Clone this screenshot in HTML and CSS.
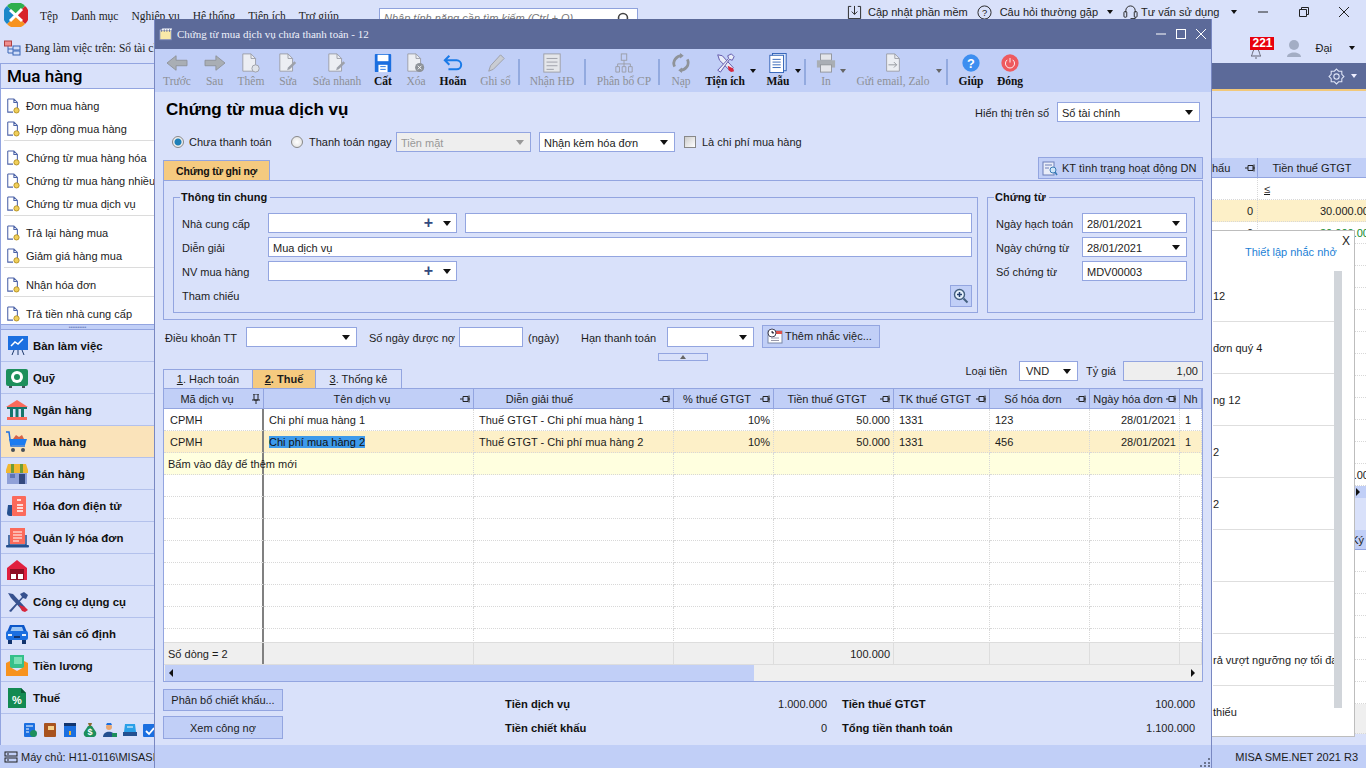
FILE: index.html
```html
<!DOCTYPE html>
<html lang="vi">
<head>
<meta charset="utf-8">
<title>MISA SME.NET 2021</title>
<link rel="stylesheet" href="styles.css">
</head>
<body>
<svg class="defs" aria-hidden="true">
  <symbol id="doc" viewBox="0 0 16 18"><path d="M2 1h7l4 4v7M2 1v15h6M9 1v4h4" fill="none" stroke="#4c63a8" stroke-width="1.2"/><circle cx="12" cy="14" r="3" fill="#f0cf5a" stroke="#b08d22"/></symbol>
  <symbol id="pin" viewBox="0 0 10 8"><path d="M0 4h3M3 1.5h5v5H3zM8 4h2M9 .5v7" fill="none" stroke="#222" stroke-width="1"/></symbol>
  <symbol id="pinv" viewBox="0 0 8 10"><path d="M1 0h6M2 0v6h4V0M0 6h8M4 6v4" fill="none" stroke="#222" stroke-width="1"/></symbol>
  <symbol id="gdoc" viewBox="0 0 20 22"><path d="M3 1h9l5 5v14H3z" fill="#eceef3" stroke="#9a9da6"/><path d="M12 1v5h5" fill="none" stroke="#9a9da6"/></symbol>
</svg>

<div class="app">
  <header class="topbar">
    <svg class="logo" viewBox="0 0 24 24"><path d="M12 12L3 3A12 12 0 0 1 21 3z" fill="#2fae4e"/><path d="M12 12L21 3A12 12 0 0 1 21 21z" fill="#d8232a"/><path d="M12 12L21 21A12 12 0 0 1 3 21z" fill="#f7931e"/><path d="M12 12L3 21A12 12 0 0 1 3 3z" fill="#1b87c9"/><path d="M6 7l12 11M18 6L6 18" stroke="#fff" stroke-width="3"/></svg>
    <nav class="menu"><span>Tệp</span><span>Danh mục</span><span>Nghiệp vụ</span><span>Hệ thống</span><span>Tiện ích</span><span>Trợ giúp</span></nav>
    <div class="search"><span>Nhập tính năng cần tìm kiếm (Ctrl + Q)</span><svg class="search-i" viewBox="0 0 12 12"><circle cx="6" cy="6" r="4.5" fill="none" stroke="#444" stroke-width="1.6"/></svg></div>
    <div class="top-right">
      <svg class="ti" viewBox="0 0 16 16"><path d="M1.5 1.5h3M11.500 1.500h3M1.500 1.500v13h13v-13M8 1v9M5 7l3 3 3-3" fill="none" stroke="#222"/></svg>
      <span class="tl t1">Cập nhật phần mềm</span>
      <svg class="ti" viewBox="0 0 16 16"><circle cx="8" cy="8" r="7" fill="none" stroke="#222"/><text x="8" y="12" class="svg-q">?</text></svg>
      <span class="tl t2">Câu hỏi thường gặp</span>
      <i class="tri tm"></i>
      <svg class="ti hs" viewBox="0 0 16 16"><path d="M3 8V6a5 5 0 0 1 10 0v2" fill="none" stroke="#222"/><rect x="1" y="7" width="3" height="6" rx="1" fill="none" stroke="#222"/><rect x="12" y="7" width="3" height="6" rx="1" fill="none" stroke="#222"/><path d="M13 13v1.500H8" fill="none" stroke="#222"/></svg>
      <span class="tl t3">Tư vấn sử dụng</span>
      <i class="tri tn"></i>
      <div class="app-ctl">
        <svg viewBox="0 0 12 12"><path d="M1 6h10" stroke="#222"/></svg>
        <svg viewBox="0 0 12 12"><path d="M1.500 3.500h7v7h-7zM3.500 3.500v-2h7v7h-2" fill="none" stroke="#222"/></svg>
        <svg viewBox="0 0 12 12"><path d="M1 1l10 10M11 1L1 11" stroke="#222"/></svg>
      </div>
    </div>
  </header>

  <div class="workbar">
    <svg class="wi" viewBox="0 0 17 16"><path d="M4 6v7h5M4 9h5" fill="none" stroke="#3a66b5"/><rect x="0.500" y="1" width="7" height="5" fill="#f08f8f" stroke="#b04040"/><rect x="9" y="6" width="7" height="4" fill="#cfdcf8" stroke="#3a66b5"/><rect x="9" y="11" width="7" height="4" fill="#cfdcf8" stroke="#3a66b5"/></svg>
    <span class="wtext">Đang làm việc trên: Sổ tài chính</span>
    <div class="user">
      <div class="bell"><svg viewBox="0 0 14 14"><path d="M2 10c2-1 1-7 5-7s3 6 5 7zM6 12h2" fill="none" stroke="#667"/></svg><span class="badge">221</span></div>
      <svg class="avatar" viewBox="0 0 16 20"><circle cx="8" cy="7" r="5" fill="#a3adc4"/><path d="M1 19c0-6 14-6 14 0z" fill="#a3adc4"/></svg>
      <span class="uname">Đại</span>
      <i class="tri un"></i>
    </div>
  </div>

  <div class="main">
    <aside class="side">
      <h2 class="side-title">Mua hàng</h2>
      <div class="side-list">
        <a><svg><use href="#doc"/></svg>Đơn mua hàng</a>
        <a><svg><use href="#doc"/></svg>Hợp đồng mua hàng</a>
        <hr>
        <a><svg><use href="#doc"/></svg>Chứng từ mua hàng hóa</a>
        <a><svg><use href="#doc"/></svg>Chứng từ mua hàng nhiều hóa đơn</a>
        <a><svg><use href="#doc"/></svg>Chứng từ mua dịch vụ</a>
        <hr>
        <a><svg><use href="#doc"/></svg>Trả lại hàng mua</a>
        <a><svg><use href="#doc"/></svg>Giảm giá hàng mua</a>
        <hr>
        <a><svg><use href="#doc"/></svg>Nhận hóa đơn</a>
        <hr>
        <a><svg><use href="#doc"/></svg>Trả tiền nhà cung cấp</a>
      </div>
      <div class="grip">••••••••••</div>
      <nav class="side-nav">
        <a><svg viewBox="0 0 24 22"><rect x="3" y="1" width="20" height="14" fill="#1b6fe0"/><path d="M6 11l4-4 3 2 5-5" fill="none" stroke="#fff" stroke-width="1.500"/><path d="M9 15l-2 5M17 15l2 5M13 15v5" stroke="#1d3a6e"/></svg>Bàn làm việc</a>
        <a><svg viewBox="0 0 24 22"><rect x="1" y="2" width="22" height="17" rx="2" fill="#1d8f5c"/><circle cx="12" cy="10" r="6" fill="#fff"/><circle cx="12" cy="10" r="3" fill="#1d8f5c"/><path d="M4 19h3v2H4zM17 19h3v2h-3z" fill="#46505a"/></svg>Quỹ</a>
        <a><svg viewBox="0 0 24 22"><path d="M12 1L23 8H1z" fill="#fb6a5b"/><rect x="2" y="8" width="20" height="2" fill="#14766c"/><path d="M5 10h3v8H5zM10.500 10h3v8h-3zM16 10h3v8h-3z" fill="#14766c"/><rect x="2" y="18" width="20" height="3" fill="#fb6a5b"/></svg>Ngân hàng</a>
        <a class="on"><svg viewBox="0 0 24 22"><path d="M8 8l3-4 3 2 3-2 2 4z" fill="#d4634a"/><path d="M1 1h3l2 14h14" fill="none" stroke="#1b6fe0" stroke-width="1.500"/><path d="M4 8h18l-2 6H6z" fill="#1b7cf0"/><circle cx="8" cy="19" r="2" fill="#46505a"/><circle cx="18" cy="19" r="2" fill="#46505a"/></svg>Mua hàng</a>
        <a><svg viewBox="0 0 24 22"><rect x="2" y="8" width="20" height="13" fill="#8fa0d8"/><rect x="14" y="11" width="6" height="10" fill="#34497e"/><rect x="5" y="11" width="5" height="4" fill="#5f74b5"/><path d="M3 1h18l2 6v3H1V7z" fill="#f2b72f"/><path d="M6 1h3v9H6zM15 1h3v9h-3z" fill="#6e9c36"/></svg>Bán hàng</a>
        <a><svg viewBox="0 0 24 22"><path d="M3 10h4v11H5a3 3 0 0 1-3-3z" fill="#24508f"/><rect x="7" y="1" width="14" height="20" rx="1" fill="#fb6a5b"/><path d="M12 5h4M12 10h6M12 13h6M12 16h6" stroke="#fff" stroke-width="1.300"/></svg>Hóa đơn điện tử</a>
        <a><svg viewBox="0 0 24 22"><rect x="5" y="1" width="15" height="16" fill="#fb6a5b"/><path d="M8 5h9M8 8h9M8 11h9M8 14h6" stroke="#fff" stroke-width="1.200"/><path d="M4 8v10h17V8" fill="none" stroke="#24508f" stroke-width="1.500"/><rect x="1" y="18" width="23" height="2.500" rx="1" fill="#24508f"/></svg>Quản lý hóa đơn</a>
        <a><svg viewBox="0 0 24 22"><path d="M2 9l10-8 10 8v12H2z" fill="#e0203f"/><rect x="5" y="10" width="14" height="11" fill="#8e0f24"/><path d="M6 15h5v5H6zM13 15h5v5h-5z" fill="#fff"/></svg>Kho</a>
        <a><svg viewBox="0 0 24 22"><path d="M4 20L17 6l-2-3 4-2 4 3-2 4-3-1L6 21z" fill="#36518f"/><path d="M3 2l5 1 12 13-3 3L6 7z" fill="#36518f"/><path d="M14 14l6 2 3 3-3 2-3-1z" fill="#d7263d"/></svg>Công cụ dụng cụ</a>
        <a><svg viewBox="0 0 24 22"><path d="M5 2h14l3 7H2z" fill="#0d57c9"/><path d="M7 4h10l1.500 4h-13z" fill="#9cc6f5"/><rect x="1" y="8" width="22" height="9" rx="2" fill="#1b6fe0"/><path d="M3 17h4v4H3zM17 17h4v4h-4z" fill="#12346e"/><path d="M3 11h4v2H3zM17 11h4v2h-4z" fill="#e7f0fb"/><rect x="9" y="13" width="6" height="2" fill="#12346e"/></svg>Tài sản cố định</a>
        <a><svg viewBox="0 0 24 22"><rect x="5" y="0" width="14" height="13" fill="#35c08a"/><rect x="9" y="2" width="8" height="7" fill="#7be0b5"/><path d="M1 8l4-2v6l7 4 7-4V6l4 2v13H1z" fill="#f7931e"/></svg>Tiền lương</a>
        <a><svg viewBox="0 0 24 22"><path d="M3 1h13l5 5v15H3z" fill="#138a52"/><path d="M16 1l5 5h-5z" fill="#0a5c36"/><text x="12" y="17" class="svg-pct">%</text></svg>Thuế</a>
      </nav>
      <div class="mini">
        <svg viewBox="0 0 14 14"><rect x="1" y="0" width="11" height="14" rx="1" fill="#1b6fe0"/><path d="M3 3h7M3 6h3M3 9h3" stroke="#fff"/><circle cx="10.500" cy="10.500" r="3.500" fill="#1d8f5c"/></svg>
        <svg viewBox="0 0 14 14"><rect x="1" y="0" width="12" height="14" rx="1" fill="#a8531f"/><rect x="5" y="3" width="6" height="4" fill="#f6d28c"/></svg>
        <svg viewBox="0 0 14 14"><rect x="1" y="2" width="12" height="12" fill="#1b6fe0"/><rect x="1" y="0" width="12" height="3" fill="#12346e"/><path d="M6 8h2v4H6z" fill="#f2b72f"/></svg>
        <svg viewBox="0 0 14 14"><path d="M5 3h4l4 6c1 3-1 5-3 5H4C2 14 0 12 1 9z" fill="#1d8f5c"/><path d="M5 0h4L8 3H6z" fill="#8a6a2f"/><text x="7" y="12" class="svg-s">$</text></svg>
        <svg viewBox="0 0 14 14"><circle cx="6" cy="4" r="3" fill="#e9a772"/><path d="M3 2h6L8 0H4z" fill="#1b6fe0"/><path d="M0 14c0-7 12-7 12 0z" fill="#24508f"/><rect x="9" y="10" width="5" height="4" fill="#1d8f5c"/></svg>
        <svg viewBox="0 0 14 14"><path d="M2 1h10l1 8H1z" fill="#2aa0e8"/><path d="M4 4h6" stroke="#fff"/><rect x="0" y="9" width="14" height="4" fill="#24508f"/></svg>
        <svg viewBox="0 0 14 14"><rect x="0" y="1" width="14" height="13" rx="1" fill="#1b6fe0"/><path d="M3 8l3 3 5-6" fill="none" stroke="#fff" stroke-width="1.800"/></svg>
      </div>
    </aside>

    <section class="content">
      <div class="cbar"><svg class="gear" viewBox="0 0 16 16"><circle cx="8" cy="8" r="2.500" fill="none" stroke="#dfe5f7"/><path d="M8 1l2 2 3 0 0 3 2 2-2 2 0 3-3 0-2 2-2-2-3 0 0-3-2-2 2-2 0-3 3 0z" fill="none" stroke="#dfe5f7"/></svg><i class="tri gt"></i></div>
      <div class="cfilter"></div>
      <div class="bg-grid">
        <div class="bg-head"><span class="bc1">hấu<svg><use href="#pin"/></svg></span><span class="bc2">Tiền thuế GTGT</span></div>
        <div class="bg-row bfil"><span class="bc1"></span><span class="bc2"><u>≤</u></span></div>
        <div class="bg-row bsel"><span class="bc1 num">0</span><span class="bc2 num clip">30.000.000</span></div>
        <div class="bg-row"><span class="bc1 num">0</span><span class="bc2 num clip green">30.000.000</span></div>
        <div class="bg-row"></div><div class="bg-row"></div><div class="bg-row"></div><div class="bg-row"></div><div class="bg-row"></div>
        <div class="bg-row"></div><div class="bg-row"></div><div class="bg-row"></div><div class="bg-row"></div><div class="bg-row"></div>
        <div class="bg-row"><span class="bc1"></span><span class="bc2 num clip">30.000.000</span></div>
        <div class="bg-scroll"><i class="tri tr"></i></div>
        <div class="bg-gap"></div>
        <div class="bg-head h2"><span class="bc2 end">Ký</span></div>
        <div class="bg-row"></div><div class="bg-row"></div><div class="bg-row"></div><div class="bg-row"></div>
        <div class="bg-row"></div><div class="bg-row"></div><div class="bg-row"></div>
        <div class="bg-row bsum"></div>
      </div>
    </section>
  </div>

  <footer class="status">
    <svg class="si" viewBox="0 0 14 12"><rect x="1" y="1" width="12" height="4" fill="none" stroke="#222"/><rect x="1" y="7" width="12" height="4" fill="none" stroke="#222"/><path d="M3 3h2M3 9h2" stroke="#222"/></svg>
    <span>Máy chủ: H11-0116\MISASME</span>
    <span class="ver">MISA SME.NET 2021 R3</span>
  </footer>

  <aside class="popup">
    <div class="pop-head"><a>Thiết lập nhắc nhở</a><span class="pop-x">X</span></div>
    <div class="pop-body">
      <ul class="pop-list">
        <li>12</li><li>đơn quý 4</li><li>ng 12</li><li>2</li><li>2</li><li></li><li></li>
        <li>rả vượt ngưỡng nợ tối đa</li><li class="last">thiếu</li>
      </ul>
      <div class="pop-track"></div>
    </div>
  </aside>

  <div class="window">
    <div class="win-title">
      <svg class="win-ic" viewBox="0 0 16 14"><rect x="1" y="2" width="13" height="11" fill="#f8e9a8" stroke="#7a88c0"/><path d="M1 2l3-2h11l-1 2z" fill="#fff"/><path d="M3 1v3M6 1v3M9 1v3M12 1v3" stroke="#5c6a99"/></svg>
      <span class="win-name">Chứng từ mua dịch vụ chưa thanh toán - 12</span>
      <div class="win-ctl">
        <svg viewBox="0 0 10 10"><path d="M0 5h10" stroke="#fff"/></svg>
        <svg viewBox="0 0 10 10"><rect x="0.500" y="0.500" width="9" height="9" fill="none" stroke="#fff"/></svg>
        <svg viewBox="0 0 10 10"><path d="M0 0l10 10M10 0L0 10" stroke="#fff"/></svg>
      </div>
    </div>

    <div class="toolbar">
      <button class="tb off"><svg viewBox="0 0 24 22"><path d="M1 11l10-8v5h12v6H11v5z" fill="#a9aeb4" stroke="#8d9298"/></svg>Trước</button>
      <button class="tb off"><svg viewBox="0 0 24 22"><path d="M23 11l-10-8v5H1v6h12v5z" fill="#a9aeb4" stroke="#8d9298"/></svg>Sau</button>
      <button class="tb off"><svg viewBox="0 0 24 22"><use href="#gdoc" width="20" height="22"/><circle cx="17" cy="17" r="4" fill="#dfe3ea" stroke="#9a9da6"/></svg>Thêm</button>
      <button class="tb off"><svg viewBox="0 0 24 22"><use href="#gdoc" width="20" height="22"/><path d="M11 19l1-3 7-7 2 2-7 7z" fill="#9da1aa"/></svg>Sửa</button>
      <button class="tb off"><svg viewBox="0 0 24 22"><use href="#gdoc" width="20" height="22"/><path d="M11 19l1-3 7-7 2 2-7 7z" fill="#9da1aa"/></svg>Sửa nhanh</button>
      <button class="tb act"><svg viewBox="0 0 24 22"><rect x="3" y="1" width="18" height="20" rx="1" fill="#1b6fe0"/><rect x="6" y="2" width="12" height="7" fill="#fff"/><rect x="7" y="13" width="10" height="8" fill="#fff"/><path d="M9 15h6M9 18h6" stroke="#1b6fe0"/></svg>Cất</button>
      <button class="tb off"><svg viewBox="0 0 24 22"><use href="#gdoc" width="20" height="22"/><circle cx="16" cy="16" r="5" fill="#8d9298"/><path d="M14 14l4 4M18 14l-4 4" stroke="#fff"/></svg>Xóa</button>
      <button class="tb act"><svg viewBox="0 0 24 22"><path d="M8 3L3 8l5 5M3 8h13a4.500 4.500 0 0 1 0 10H7" fill="none" stroke="#1b7be8" stroke-width="2.200"/></svg>Hoãn</button>
      <button class="tb off"><svg viewBox="0 0 24 22"><path d="M4 20l2-6L17 2l4 4L9 18z" fill="#c9ccd3" stroke="#9a9da6"/></svg>Ghi sổ</button>
      <i class="tb-sep"></i>
      <button class="tb off"><svg viewBox="0 0 24 22"><rect x="3" y="1" width="18" height="20" fill="#e4e6ea" stroke="#9a9da6"/><path d="M6 6h12M6 10h12M6 14h12M6 18h8" stroke="#9a9da6"/></svg>Nhận HĐ</button>
      <i class="tb-sep wide"></i>
      <button class="tb off"><svg viewBox="0 0 24 22"><rect x="9" y="1" width="6" height="7" fill="none" stroke="#9a9da6"/><path d="M12 8v4M5 12h14M5 12v3M12 12v3M19 12v3" stroke="#9a9da6"/><path d="M3 15h4v6H3zM10 15h4v6h-4zM17 15h4v6h-4z" fill="none" stroke="#9a9da6"/></svg>Phân bổ CP</button>
      <i class="tb-sep"></i>
      <button class="tb off"><svg viewBox="0 0 24 22"><path d="M5 15C2 9 7 3 13 3M19 7c3 6-2 12-8 12" fill="none" stroke="#8f9399" stroke-width="3"/><path d="M11 0l4 3-4 3zM13 16l-4 3 4 3z" fill="#8f9399"/></svg>Nạp</button>
      <button class="tb act drop d1"><svg viewBox="0 0 24 22"><path d="M4 2l5 1 12 13-3 4L6 8z" fill="#e9edf8" stroke="#5b4fa6"/><path d="M4 19L16 6l-1-3 4-2 3 3-2 4-3-1L7 21z" fill="#e9edf8" stroke="#5b4fa6"/><path d="M15 14l6 3 1 3-3 1-3-2z" fill="#d7263d"/></svg>Tiện ích</button>
      <i class="tb-gap"></i>
      <button class="tb act drop d2"><svg viewBox="0 0 24 22"><rect x="6" y="0.500" width="15" height="19" fill="#dbe7fb" stroke="#2c5fb5"/><rect x="3" y="2.500" width="15" height="19" fill="#fff" stroke="#2c5fb5"/><path d="M6 7h9M6 10h9M6 13h9M6 16h9" stroke="#2c5fb5"/></svg>Mẫu</button>
      <i class="tb-sep end"></i>
      <button class="tb off drop d3"><svg viewBox="0 0 24 22"><rect x="6" y="1" width="12" height="7" fill="#e4e6ea" stroke="#8f9399"/><rect x="2" y="8" width="20" height="8" fill="#a9aeb4"/><rect x="6" y="13" width="12" height="8" fill="#e4e6ea" stroke="#8f9399"/></svg>In</button>
      <button class="tb off drop d4"><svg viewBox="0 0 24 22"><use href="#gdoc" width="20" height="22" x="2"/><path d="M7 13h9M13 10l3 3-3 3" fill="none" stroke="#8f9399"/></svg>Gửi email, Zalo</button>
      <i class="tb-sep end"></i>
      <button class="tb act"><svg viewBox="0 0 24 22"><circle cx="12" cy="11" r="9.500" fill="#3d8ef0"/><text x="12" y="16" class="svg-h">?</text></svg>Giúp</button>
      <button class="tb act"><svg viewBox="0 0 24 22"><circle cx="12" cy="11" r="9.500" fill="#ee5a5f"/><path d="M9 7.500a5 5 0 1 0 6 0M12 5.500v5" fill="none" stroke="#fff"/></svg>Đóng</button>
    </div>

    <div class="win-body">
      <div class="head">
        <h1>Chứng từ mua dịch vụ</h1>
        <label class="lbl shown">Hiển thị trên số</label>
        <div class="combo w143">Sổ tài chính</div>
      </div>

      <div class="pay">
        <i class="radio on"></i><span class="p1">Chưa thanh toán</span>
        <i class="radio"></i><span class="p2">Thanh toán ngay</span>
        <div class="combo dis w135">Tiền mặt</div>
        <div class="combo w136">Nhận kèm hóa đơn</div>
        <i class="check"></i><span>Là chi phí mua hàng</span>
      </div>

      <div class="tabrow">
        <div class="tab-o">Chứng từ ghi nợ</div>
        <button class="kt"><svg viewBox="0 0 16 16"><rect x="1" y="2" width="11" height="13" fill="#e9edf8" stroke="#6c7fb8"/><path d="M3 5h7M3 8h4" stroke="#6c7fb8"/><circle cx="11" cy="10" r="3" fill="#cfe6f8" stroke="#3a7ab5"/><path d="M13 12l2 3" stroke="#3a7ab5" stroke-width="1.500"/></svg>KT tình trạng hoạt động DN</button>
      </div>

      <div class="panel">
        <fieldset class="fs fs-main">
          <legend>Thông tin chung</legend>
          <div class="fgrid">
            <label>Nhà cung cấp</label>
            <div class="input plus"><b>+</b></div>
            <i></i>
            <div class="input"></div>
            <label>Diễn giải</label>
            <div class="input span3 pad">Mua dịch vụ</div>
            <label>NV mua hàng</label>
            <div class="input plus"><b>+</b></div>
            <i></i><i></i>
            <label>Tham chiếu</label>
            <i></i><i></i>
            <button class="zoom"><svg viewBox="0 0 16 16"><circle cx="6.500" cy="6.500" r="5" fill="#e6f1fb" stroke="#44607f" stroke-width="1.400"/><path d="M4 6.500h5M6.500 4v5" stroke="#24406f" stroke-width="1.500"/><path d="M10.500 10.500l4 4" stroke="#44607f" stroke-width="2"/></svg></button>
          </div>
        </fieldset>
        <fieldset class="fs fs-doc">
          <legend>Chứng từ</legend>
          <div class="dgrid">
            <label>Ngày hạch toán</label><div class="combo">28/01/2021</div>
            <label>Ngày chứng từ</label><div class="combo">28/01/2021</div>
            <label>Số chứng từ</label><div class="input pad">MDV00003</div>
          </div>
        </fieldset>
      </div>

      <div class="terms">
        <label>Điều khoản TT</label>
        <div class="combo"></div>
        <label class="ind12">Số ngày được nợ</label>
        <div class="input"></div>
        <label class="ind5">(ngày)</label>
        <label>Hạn thanh toán</label>
        <div class="combo"></div>
        <i></i>
        <button class="btn remind"><svg viewBox="0 0 16 16"><rect x="1" y="3" width="14" height="12" fill="#fff" stroke="#7a88a8"/><rect x="6" y="3" width="9" height="3" fill="#e0524a"/><circle cx="5" cy="5" r="4" fill="#fff" stroke="#445"/><path d="M5 3v2h2" stroke="#445"/><path d="M4 10h8M4 12.500h8" stroke="#99a"/></svg>Thêm nhắc việc...</button>
      </div>

      <div class="collapse"><i></i></div>

      <div class="tabs-row">
        <div class="tabs">
          <span class="tab t-a"><u>1</u>. Hạch toán</span>
          <span class="tab t-b"><u>2</u>. Thuế</span>
          <span class="tab t-c"><u>3</u>. Thống kê</span>
        </div>
        <div class="cur">
          <label>Loại tiền</label>
          <div class="combo w59">VND</div>
          <label>Tỷ giá</label>
          <div class="input rate">1,00</div>
        </div>
      </div>

      <div class="grid">
        <div class="grid-main">
          <table>
            <colgroup><col class="c1"><col class="c2"><col class="c3"><col class="c4"><col class="c5"><col class="c6"><col class="c7"><col class="c8"><col class="c9"></colgroup>
            <thead><tr>
              <th>Mã dịch vụ<svg class="pinv"><use href="#pinv"/></svg></th>
              <th>Tên dịch vụ<svg class="pin"><use href="#pin"/></svg></th>
              <th class="dg">Diễn giải thuế<svg class="pin"><use href="#pin"/></svg></th>
              <th>% thuế GTGT<svg class="pin"><use href="#pin"/></svg></th>
              <th>Tiền thuế GTGT<svg class="pin"><use href="#pin"/></svg></th>
              <th>TK thuế GTGT<svg class="pin"><use href="#pin"/></svg></th>
              <th>Số hóa đơn<svg class="pin"><use href="#pin"/></svg></th>
              <th>Ngày hóa đơn<svg class="pin"><use href="#pin"/></svg></th>
              <th class="nopin">Nh</th>
            </tr></thead>
            <tbody>
              <tr><td>CPMH</td><td>Chi phí mua hàng 1</td><td>Thuế GTGT - Chi phí mua hàng 1</td><td class="num">10%</td><td class="num">50.000</td><td>1331</td><td>123</td><td class="num">28/01/2021</td><td>1</td></tr>
              <tr class="cur-row"><td>CPMH</td><td><span class="selected">Chi phí mua hàng 2</span></td><td>Thuế GTGT - Chi phí mua hàng 2</td><td class="num">10%</td><td class="num">50.000</td><td>1331</td><td>456</td><td class="num">28/01/2021</td><td>1</td></tr>
              <tr class="new-row"><td class="newtxt">Bấm vào đây để thêm mới</td><td></td><td></td><td></td><td></td><td></td><td></td><td></td><td></td></tr>
              <tr><td></td><td></td><td></td><td></td><td></td><td></td><td></td><td></td><td></td></tr>
              <tr><td></td><td></td><td></td><td></td><td></td><td></td><td></td><td></td><td></td></tr>
              <tr><td></td><td></td><td></td><td></td><td></td><td></td><td></td><td></td><td></td></tr>
              <tr><td></td><td></td><td></td><td></td><td></td><td></td><td></td><td></td><td></td></tr>
              <tr><td></td><td></td><td></td><td></td><td></td><td></td><td></td><td></td><td></td></tr>
              <tr><td></td><td></td><td></td><td></td><td></td><td></td><td></td><td></td><td></td></tr>
              <tr><td></td><td></td><td></td><td></td><td></td><td></td><td></td><td></td><td></td></tr>
              <tr><td></td><td></td><td></td><td></td><td></td><td></td><td></td><td></td><td></td></tr>
            </tbody>
          </table>
        </div>
        <div class="grid-foot">
          <table>
            <colgroup><col class="c1"><col class="c2"><col class="c3"><col class="c4"><col class="c5"><col class="c6"><col class="c7"><col class="c8"><col class="c9"></colgroup>
            <tr><td class="foot-lbl">Số dòng = 2</td><td></td><td></td><td></td><td class="num">100.000</td><td></td><td></td><td></td><td></td></tr>
          </table>
        </div>
        <div class="hscroll"><i class="tri tl-a"></i><i class="thumb"></i><i class="track"></i><i class="tri tr-a"></i></div>
      </div>

      <div class="bottom">
        <div class="bbtns">
          <button class="btn b1">Phân bổ chiết khấu...</button>
          <button class="btn b2">Xem công nợ</button>
        </div>
        <div class="sum">
          <b>Tiền dịch vụ</b><span class="num">1.000.000</span><b>Tiền thuế GTGT</b><span class="num">100.000</span>
          <b>Tiền chiết khấu</b><span class="num">0</span><b>Tổng tiền thanh toán</b><span class="num">1.100.000</span>
        </div>
      </div>
    </div>

    <div class="win-foot"><svg class="wgrip" viewBox="0 0 10 10"><path d="M8 1h2v2H8zM4 5h2v2H4zM8 5h2v2H8zM0 8h2v2H0zM4 8h2v2H4zM8 8h2v2H8z" fill="#6b7590"/></svg></div>
  </div>
</div>
</body>
</html>
```

FILE: styles.css
```css
* { box-sizing: border-box; }
html, body { margin: 0; padding: 0; overflow: hidden; }
body { font: 11px/14px "Liberation Sans", Arial, sans-serif; color: #1c1c1c; }
.defs { position: absolute; width: 0; height: 0; }
.app { position: relative; width: 1366px; height: 768px; overflow: hidden; background: #d9e1fa; display: flex; flex-direction: column; }

/* top bar */
.topbar { height: 33px; display: flex; align-items: flex-start; flex: none; }
.logo { width: 24px; height: 24px; margin: 3px 0 0 4px; flex: none; }
.menu { width: 339px; margin-left: 12px; padding-top: 9px; display: flex; gap: 13px; font-family: "Liberation Serif", serif; font-size: 11.500px; flex: none; }
.search { width: 259px; height: 28px; margin-top: 8px; background: #fff; border: 1px solid #8fa2dc; display: flex; align-items: flex-start; padding: 2px 4px; color: #777; font-style: italic; flex: none; }
.search span { flex: 1; }
.search-i { width: 12px; height: 12px; margin: 1px 4px 0 0; }
.top-right { flex: 1; display: flex; align-items: center; height: 24px; }
.ti { width: 15px; height: 15px; margin-left: 209px; flex: none; }
.ti ~ .ti { margin-left: 9px; }
.ti.hs { margin-left: 10px; }
.tl { margin-left: 6px; white-space: nowrap; color: #222; }
.t2 { margin-left: 8px; }
.t3 { margin-left: 3px; }
.svg-q { font: 10px "Liberation Sans", sans-serif; text-anchor: middle; fill: #222; }
.svg-h { font: bold 14px "Liberation Sans", sans-serif; text-anchor: middle; fill: #fff; }
.svg-pct { font: bold 11px "Liberation Sans", sans-serif; text-anchor: middle; fill: #fff; }
.svg-s { font: bold 9px "Liberation Sans", sans-serif; text-anchor: middle; fill: #fff; }
.tri { display: block; width: 0; height: 0; border: 3.5px solid transparent; border-top: 4px solid #111; border-bottom: 0; flex: none; }
.tm { margin-left: 9px; }
.tn { margin-left: 12px; }
.app-ctl { margin-left: 11px; display: flex; gap: 28.500px; padding-left: 9px; flex: none; }
.app-ctl svg { width: 12px; height: 12px; }

.workbar { height: 30px; display: flex; align-items: center; flex: none; position: relative; }
.wi { width: 17px; height: 16px; margin: 0 4px 0 4px; flex: none; }
.wtext { width: 400px; white-space: nowrap; font-family: "Liberation Serif", serif; font-size: 11.500px; }
.user { margin-left: auto; display: flex; align-items: center; padding-right: 11px; }
.bell { position: relative; width: 30px; height: 24px; }
.bell svg { position: absolute; left: 2px; top: 10px; width: 14px; height: 14px; }
.badge { position: absolute; left: 3px; top: 1px; width: 24px; height: 13px; background: #e8000d; color: #fff; font: bold 12px/13px "Liberation Sans", sans-serif; text-align: center; }
.avatar { width: 16px; height: 20px; margin-left: 9px; }
.uname { margin-left: 13px; }
.un { margin-left: 17px; }

/* main */
.main { height: 682px; display: flex; flex: none; }
.side { width: 154px; flex: none; display: flex; flex-direction: column; border: 1px solid #93a5e0; border-right: 0; border-bottom: 0; }
.side-title { margin: 0; height: 25px; border-bottom: 1px solid #93a5e0; padding-left: 6px; font: 500 17px/24px Roboto, "Liberation Sans", sans-serif; color: #000; }
.side-list { height: 235px; background: #fff; padding: 5px 0 0 0; overflow: hidden; flex: none; }
.side-list a { display: flex; align-items: center; height: 23px; padding-left: 5px; white-space: nowrap; color: #222; }
.side-list svg { width: 14px; height: 16px; margin-right: 6px; flex: none; }
.side-list hr { border: 0; height: 1px; margin: 0 0 5px 3px; background: #dcdcdc; }
.grip { height: 6px; background: #c1cff7; border-top: 1px solid #93a5e0; border-bottom: 1px solid #93a5e0; color: #7083bd; font-size: 5px; line-height: 4px; letter-spacing: 0; text-align: center; overflow: hidden; }
.side-nav { display: flex; flex-direction: column; flex: none; }
.side-nav a { height: 32px; display: flex; align-items: center; padding-left: 4px; border-bottom: 1px solid #b3c1ec; font-weight: bold; font-size: 11.400px; color: #111; white-space: nowrap; }
.side-nav a.on { background: #fae3ba; }
.side-nav svg { width: 24px; height: 22px; margin-right: 4px; flex: none; }
.mini { flex: 1; display: flex; align-items: center; gap: 6px; padding: 0 0 0 22px; overflow: hidden; }
.mini svg { width: 14px; height: 14px; flex: none; }

.content { flex: 1; display: flex; flex-direction: column; min-width: 0; }
.cbar { height: 26px; background: #5c6a99; display: flex; align-items: center; justify-content: flex-end; padding-right: 9px; border-bottom: 0; flex: none; }
.gear { width: 17px; height: 17px; margin-right: 6px; }
.gt { border-top-color: #eef; }
.cfilter { height: 29px; border-top: 2px solid #f2c879; border-bottom: 1px solid #93a5e0; flex: none; }
.bg-grid { margin: 40px 0 0 auto; width: 154px; flex: none; background: #fff; }
.bg-head { height: 20px; display: flex; background: #c1cff7; border-bottom: 1px solid #93a5e0; align-items: center; }
.bc1 { width: 46px; height: 100%; border-right: 1px solid #93a5e0; display: flex; align-items: center; justify-content: space-between; padding-right: 2px; flex: none; }
.bc1 svg { width: 10px; height: 8px; }
.bc2 { flex: 1; text-align: center; white-space: nowrap; overflow: hidden; }
.bc2.end { text-align: right; padding-right: 2px; }
.bg-row { height: 22px; display: flex; align-items: center; border-bottom: 1px dotted #d8d8d8; }
.bg-row .bc1 { border-right: 1px dotted #d8d8d8; justify-content: flex-end; padding-right: 4px; }
.bg-row .bc2 { line-height: 22px; }
.bfil .bc2 { text-align: left; padding-left: 6px; }
.bsel { background: #fdf0c8; }
.bc2.clip { text-align: left; padding-left: 62px; overflow: hidden; }
.green { color: #118a2c; }
.bg-scroll { height: 12px; background: #c1cff7; display: flex; align-items: center; padding-left: 144px; }
.tr, .tr-a { border: 4px solid transparent; border-left: 4px solid #111; border-right: 0; }
.bg-gap { height: 32px; background: #d9e1fa; }
.bg-head.h2 { justify-content: flex-end; }
.bsum { background: #efefef; height: 30px; }

.status { height: 23px; background: #c1cff7; display: flex; align-items: center; padding: 0 8px 0 4px; flex: none; white-space: nowrap; }
.si { width: 14px; height: 12px; margin-right: 3px; }
.ver { margin-left: auto; }

/* reminder popup lies over the page */
.popup { position: absolute; left: 1200px; top: 230px; width: 155px; height: 507px; background: #fff; border-top: 1px solid #bdbdbd; border-right: 1px solid #bdbdbd; border-bottom: 1px solid #bdbdbd; }
.pop-head { height: 39px; padding: 14px 0 0 45px; color: #1d7fd6; position: relative; white-space: nowrap; }
.pop-x { position: absolute; right: 4px; top: 3px; color: #222; font-size: 12px; }
.pop-body { display: flex; }
.pop-list { list-style: none; margin: 0; padding: 0 0 0 13px; width: 134px; flex: none; white-space: nowrap; }
.pop-list li { height: 52px; line-height: 52px; border-bottom: 1px solid #dedede; }
.pop-list li.last { border-bottom: 0; }
.pop-track { width: 8px; height: 437px; margin: 1px 0 0 0; background: #d1d5da; flex: none; }

/* floating document window */
.window { position: absolute; left: 154px; top: 19px; width: 1058px; height: 749px; background: #d9e1fa; border: 1px solid #7988c2; border-top: 0; border-bottom: 0; display: flex; flex-direction: column; }
.win-title { height: 30px; background: #5c6a99; display: flex; align-items: center; flex: none; padding-left: 4px; }
.win-ic { width: 14px; height: 13px; flex: none; }
.win-name { margin-left: 4px; color: #eef1fb; font-family: "Liberation Serif", serif; font-size: 11px; white-space: nowrap; }
.win-ctl { margin-left: auto; display: flex; gap: 10px; padding-right: 5px; }
.win-ctl svg { width: 10px; height: 10px; }
.toolbar { height: 43px; flex: none; background: #c1cff7; display: grid; padding-left: 3px; grid-template-columns: 38px 37px 36px 38px 60px 32px 34px 40px 45px 2px 64px 6px 68px 2px 42px 46px 10px 40px 8px 40px 94px 8px 46px 32px; align-items: stretch; }
.tb { position: relative; border: 0; background: none; padding: 4px 0 0; margin: 0; font: 11.500px/13px "Liberation Serif", serif; display: flex; flex-direction: column; align-items: center; white-space: nowrap; min-width: 0; }
.tb svg { width: 22px; height: 20px; margin-bottom: 2px; flex: none; }
.tb.off { color: #8d8f96; }
.tb.act { color: #111; font-weight: bold; }
.drop::after { content: ""; position: absolute; top: 20px; border: 3px solid transparent; border-top: 4px solid #111; border-bottom: 0; }
.d1::after { right: -8px; }
.d2::after { right: -3px; }
.d3::after { right: 0; border-top-color: #666; }
.d4::after { right: -2px; border-top-color: #666; }
.tb-sep { display: block; width: 2px; height: 26px; margin-top: 10px; background: #93aadf; }
.tb-sep.end { justify-self: end; }
.tb-gap { display: block; }

.win-body { flex: 1; padding: 0 8px; display: flex; flex-direction: column; min-height: 0; }
.head { height: 32px; display: flex; padding-top: 10px; flex: none; }
.head h1 { margin: -3px auto 0 3px; font: bold 17px/22px "Liberation Sans", sans-serif; color: #000; }
.shown { margin: 4px 8px 0 0; }
.combo, .input { height: 20px; background: #fff; border: 1px solid #93a5e0; line-height: 20px; white-space: nowrap; overflow: hidden; }
.combo { position: relative; padding-left: 4px; }
.combo::after { content: ""; position: absolute; right: 6px; top: 7px; border: 4px solid transparent; border-top: 5px solid #111; border-bottom: 0; }
.w143 { width: 143px; margin-right: 3px; }
.w135 { width: 135px; margin-left: 4px; }
.w136 { width: 136px; margin-left: 8px; }
.w59 { width: 59px; padding-left: 6px; }
.combo.dis { background: #eee; color: #999; }
.combo.dis::after { border-top-color: #999; }
.pay { height: 33px; padding-top: 8px; display: flex; align-items: flex-start; flex: none; line-height: 20px; }
.pay span { white-space: nowrap; }
.radio { width: 12px; height: 12px; margin: 4px 0 0 9px; border-radius: 50%; border: 1px solid #888; background: radial-gradient(circle, #fff, #ddd); display: block; flex: none; }
.radio.on { background: radial-gradient(circle, #1d7fb8 0 3px, #eee 4px); }
.p1 { width: 102px; margin-left: 5px; }
.p1 + .radio { margin-left: 0; }
.p2 { width: 83px; margin-left: 6px; }
.check { display: block; width: 12px; height: 12px; margin: 4px 6px 0 9px; background: linear-gradient(135deg, #ccc, #fff); border: 1px solid #888; flex: none; }
.tabrow { height: 23px; display: flex; justify-content: space-between; align-items: flex-end; flex: none; }
.tab-o { width: 107px; height: 20px; background: #f5ca7f; border: 1px solid #93a5e0; border-bottom: 0; font-weight: bold; font-size: 10.500px; letter-spacing: -0.2px; line-height: 20px; text-align: center; color: #111; }
.kt { width: 165px; height: 22px; margin-bottom: 1px; padding: 0 0 0 3px; background: #c1cff7; border: 1px solid #93a5e0; font: 11px "Liberation Sans", sans-serif; color: #1c1c1c; display: flex; align-items: center; gap: 4px; white-space: nowrap; }
.kt svg { width: 16px; height: 16px; flex: none; }
.panel { height: 140px; border: 1px solid #93a5e0; padding: 9px 7px 0 9px; display: flex; gap: 9px; flex: none; }
.fs { margin: 0; padding: 9px 5px 0 8px; border: 1px solid #93a5e0; height: 123px; min-width: 0; }
.fs legend { padding: 0 3px 0 1px; margin-left: -2px; font-weight: bold; font-size: 11px; line-height: 14px; color: #111; }
.fs-main { width: 805px; }
.fs-doc { width: 208px; padding-right: 7px; }
.fgrid { display: grid; grid-template-columns: 86px 189px 8px 1fr; row-gap: 4px; grid-auto-rows: 20px; align-items: center; }
.dgrid { display: grid; grid-template-columns: 86px 105px; row-gap: 4px; grid-auto-rows: 20px; align-items: center; }
.fgrid label, .dgrid label, .terms label { padding-top: 2px; }
.span3 { grid-column: span 3; }
.pad { padding-left: 4px; }
.input.plus { position: relative; }
.input.plus b { position: absolute; right: 23px; top: 0; font: bold 16px/17px "Liberation Sans", sans-serif; color: #34497e; }
.input.plus::after { content: ""; position: absolute; right: 5px; top: 7px; border: 4px solid transparent; border-top: 5px solid #111; border-bottom: 0; }
.zoom { justify-self: end; width: 22px; height: 22px; padding: 2px; margin-top: 2px; background: #c1cff7; border: 1px solid #93a5e0; }
.zoom svg { width: 16px; height: 16px; display: block; }
.terms { height: 33px; padding-top: 7px; display: grid; grid-template-columns: 81px 111px 102px 64px 58px 86px 87px 8px 118px; grid-template-rows: 20px; align-items: center; flex: none; padding-left: 2px; white-space: nowrap; }
.ind12 { padding-left: 12px; }
.ind5 { padding-left: 5px; }
.btn { background: #c1cff7; border: 1px solid #93a5e0; font: 11px "Liberation Sans", sans-serif; color: #1c1c1c; padding: 0; white-space: nowrap; }
.remind { height: 23px; margin-top: -2px; display: flex; align-items: center; gap: 2px; padding-left: 4px; }
.remind svg { width: 16px; height: 16px; flex: none; }
.collapse { width: 50px; height: 8px; margin-left: 495px; border: 1px solid #93a5e0; display: flex; justify-content: center; align-items: center; flex: none; }
.collapse i { display: block; width: 0; height: 0; border: 3px solid transparent; border-bottom: 4px solid #666; border-top: 0; }
.tabs-row { height: 27px; display: flex; justify-content: space-between; flex: none; }
.tabs { display: flex; align-self: flex-end; height: 19px; }
.tab { border: 1px solid #93a5e0; border-bottom: 0; border-left: 0; line-height: 18px; text-align: center; white-space: nowrap; }
.t-a { width: 90px; border-left: 1px solid #93a5e0; }
.t-b { width: 63px; background: #f5ca7f; font-weight: bold; }
.t-c { width: 86px; }
.cur { display: flex; align-items: flex-start; line-height: 20px; }
.cur label { white-space: nowrap; }
.cur .w59 { margin: 0 8px 0 12px; line-height: 19px; }
.input.rate { width: 80px; margin-left: 7px; background: #eee; text-align: right; padding-right: 4px; line-height: 19px; }

.grid { height: 294px; border: 1px solid #93a5e0; display: flex; flex-direction: column; flex: none; background: #fff; }
.grid table { table-layout: fixed; border-collapse: separate; border-spacing: 0; width: 1038px; }
.grid-main { height: 253px; overflow: hidden; flex: none; }
.c1 { width: 100px; } .c2 { width: 210px; } .c3 { width: 200px; } .c4 { width: 100px; } .c5 { width: 120px; }
.c6 { width: 96px; } .c7 { width: 100px; } .c8 { width: 90px; } .c9 { width: 22px; }
th { position: relative; height: 20px; padding: 0 13px 0 0; background: #c1cff7; border-right: 1px solid #93a5e0; border-bottom: 1px solid #93a5e0; font-weight: normal; text-align: center; white-space: nowrap; overflow: hidden; }
th.dg { padding-right: 68px; }
th.nopin { padding: 0; }
.pin { position: absolute; right: 3px; top: 6px; width: 10px; height: 8px; }
.pinv { position: absolute; right: 3px; top: 5px; width: 8px; height: 10px; }
td { height: 22px; padding: 0 4px 0 5px; border-right: 1px dotted #d8d8d8; border-bottom: 1px dotted #d8d8d8; white-space: nowrap; }
td:first-child { border-right: 2px solid #808080; padding-left: 6px; }
td.num { text-align: right; padding-right: 3px; }
.cur-row { background: #fdf0c8; }
.new-row { background: #ffffdf; }
td.newtxt { padding-left: 4px; overflow: visible; }
.selected { background: #3d9aeb; color: #111; }
.grid-foot { height: 23px; background: #efefef; border-top: 1px solid #ddd; border-bottom: 1px solid #ddd; flex: none; }
.grid-foot td { height: 21px; border-bottom: 0; border-right: 1px solid #ddd; }
.grid-foot td:first-child { border-right: 2px solid #808080; }
td.foot-lbl { padding-left: 4px; }
.hscroll { height: 16px; display: flex; align-items: center; background: #efefef; flex: none; }
.tl-a { border: 4px solid transparent; border-right: 4px solid #111; border-left: 0; margin: 0 -8px 0 5px; position: relative; }
.thumb { display: block; width: 589px; height: 100%; background: #c1cff7; }
.track { display: block; flex: 1; }
.tri.tr-a { margin-right: 7px; }

.bottom { height: 63px; display: flex; flex: none; }
.bbtns { width: 120px; padding-top: 7px; display: flex; flex-direction: column; gap: 5px; flex: none; }
.b1 { height: 22px; }
.b2 { height: 23px; }
.sum { margin: 10px 0 0 222px; display: grid; grid-template-columns: 120px 202px 120px 248px; column-gap: 0; grid-auto-rows: 24px; align-items: center; }
.sum b { color: #111; white-space: nowrap; font-size: 11.200px; }
.sum b:nth-of-type(even) { margin-left: 15px; }
.num { text-align: right; }
.win-foot { height: 23px; background: #c1cff7; flex: none; display: flex; justify-content: flex-end; align-items: flex-end; padding: 0 1px 1px 0; }
.wgrip { width: 10px; height: 10px; }
```
